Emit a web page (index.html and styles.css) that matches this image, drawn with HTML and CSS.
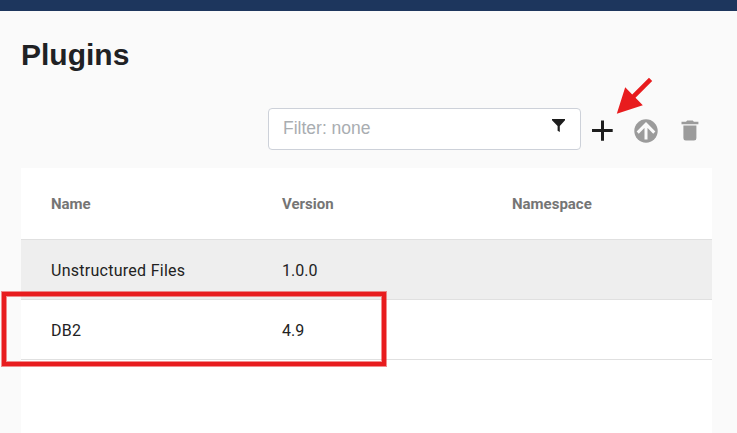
FILE: index.html
```html
<!DOCTYPE html>
<html lang="en">
<head>
<meta charset="utf-8">
<title>Plugins</title>
<link rel="stylesheet" href="styles.css">
</head>
<body>
<header class="topbar"></header>
<main class="page">
  <h1 class="title">Plugins</h1>
  <div class="toolbar">
    <div class="filter">
      <span class="filter-text">Filter: none</span>
      <svg class="filter-icon" width="13" height="13" viewBox="0 0 13 13"><path d="M0 0H13V1.2L7.8 7V13L5.6 11.8V7L0 1.2Z"/></svg>
    </div>
    <div class="actions">
      <svg class="add" width="21" height="21" viewBox="0 0 21 21"><path d="M9 0.5H12V9H20.7V12H12V20.7H9V12H0V9H9Z"/></svg>
      <svg class="upload" width="24" height="24" viewBox="0 0 24 24"><circle cx="12" cy="12" r="11.7"/><path d="M12 20.6V5M3.7 13.6L12 5.2L20.3 13.6"/></svg>
      <svg class="trash" width="18" height="21" viewBox="0 0 18 21"><path d="M0.5 1.8H5L6.2 0.5H11.7L12.9 1.8H17.4V4.2H0.5ZM2.4 5.5H15.4V18.2Q15.4 20.6 13 20.6H4.8Q2.4 20.6 2.4 18.2Z"/></svg>
    </div>
  </div>
  <section class="table">
    <div class="row head"><span>Name</span><span>Version</span><span>Namespace</span></div>
    <div class="row shaded"><span class="name">Unstructured Files</span><span>1.0.0</span><span></span></div>
    <div class="row"><span class="name">DB2</span><span>4.9</span><span></span></div>
  </section>
</main>
<div class="highlight"></div>
<svg class="arrow" width="38" height="38" viewBox="0 0 38 38"><path d="M0.8 36.8L9.2 10.2L16.2 17.5L33 0.8L36.2 4L19.5 20.8L26.8 28.3Z"/></svg>
</body>
</html>
```

FILE: styles.css
```css
* { box-sizing: border-box; }
body {
  margin: 0;
  height: 433px;
  display: flex;
  flex-direction: column;
  overflow: hidden;
  position: relative;
  background: #fafafa;
  color: #1f1f1f;
  font-family: Roboto, sans-serif;
}
.topbar { height: 11px; flex: none; background: #1d365d; }
.page {
  flex: 1;
  display: flex;
  flex-direction: column;
  padding: 26px 25px 0 21px;
}
.title {
  margin: 0;
  font: bold 30px/36px "Liberation Sans", sans-serif;
  color: #202124;
}
.toolbar {
  display: flex;
  justify-content: flex-end;
  margin-top: 35px;
  padding-right: 13px;
}
.filter {
  display: flex;
  justify-content: space-between;
  width: 313px;
  height: 42px;
  padding: 0 15px 0 14px;
  background: #fff;
  border: 1px solid #cdd1d9;
  border-radius: 4px;
}
.filter-text {
  font: 17.5px/38px "Liberation Sans", sans-serif;
  color: #a9adb1;
}
.filter-icon { margin-top: 10px; fill: #1d1d1d; }
.actions { display: flex; padding-left: 11px; }
.add { margin-top: 12px; fill: #1d1d1d; }
.upload { margin: 11px 0 0 21px; fill: #9b9b9b; }
.upload path { fill: none; stroke: #fafafa; stroke-width: 3; }
.trash { margin: 12px 0 0 23px; fill: #9b9b9b; }
.table { flex: 1; margin-top: 18px; background: #fff; }
.row {
  display: grid;
  grid-template-columns: 231px 230px 1fr;
  align-items: center;
  height: 60px;
  border-bottom: 1px solid #e0e0e0;
  font-size: 16px;
  color: #222;
}
.row span { padding: 2px 0 0 30px; }
.name { letter-spacing: 0.27px; }
.row.head { height: 72px; font-size: 15px; font-weight: 700; color: #757575; }
.row.head span { padding-top: 0; }
.shaded { background: #eee; }
.highlight {
  position: absolute;
  left: 2px;
  top: 292px;
  width: 384px;
  height: 74px;
  border: 4px solid #e81c1e;
  box-shadow: 0 0 0 1px rgba(232, 28, 30, 0.5), inset 0 0 0 1px rgba(232, 28, 30, 0.5);
}
.arrow { position: absolute; left: 616px; top: 77px; fill: #e81c1e; }
```
